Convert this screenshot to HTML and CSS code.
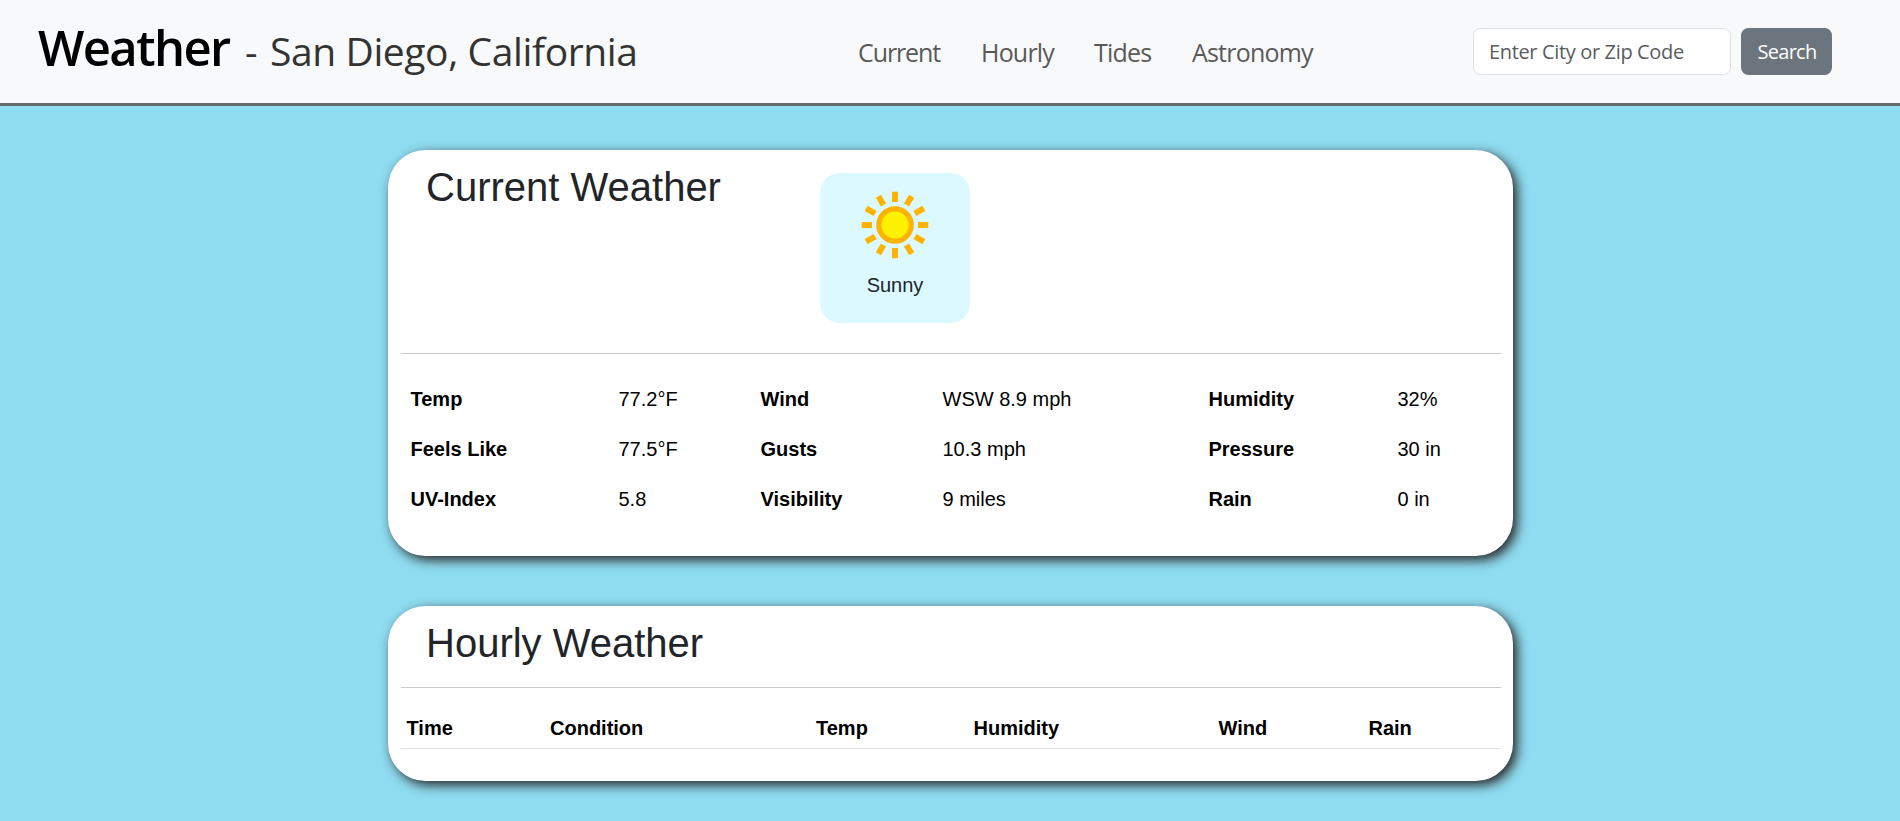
FILE: index.html
```html
<!DOCTYPE html>
<html lang="en">
<head>
<meta charset="utf-8">
<title>Weather</title>
<link rel="stylesheet" href="styles.css">
</head>
<body>
<header class="navbar">
  <div class="brand"><span class="brand-name">Weather</span><span class="brand-dash">-</span><span class="brand-place">San Diego, California</span></div>
  <nav class="nav">
    <a class="nav-link nav-current">Current</a>
    <a class="nav-link nav-hourly">Hourly</a>
    <a class="nav-link nav-tides">Tides</a>
    <a class="nav-link nav-astronomy">Astronomy</a>
  </nav>
  <form class="search">
    <input class="search-input" type="text" placeholder="Enter City or Zip Code">
    <button class="search-button" type="button">Search</button>
  </form>
</header>
<main class="content">
  <section class="card card-current">
    <div class="card-head">
      <h2 class="card-title">Current Weather</h2>
      <div class="condition">
        <svg class="sun" viewBox="0 0 80 80" width="80" height="80">
          <circle cx="40" cy="40" r="16.2" fill="#fff200" stroke="#ffb300" stroke-width="5.2"/>
          <g stroke="#ffb300" stroke-width="6">
            <path d="M40 6.7V17M40 63V73.3M6.7 40H17M63 40H73.3"/>
            <path d="M40 6.7V17M40 63V73.3M6.7 40H17M63 40H73.3" transform="rotate(30 40 40)"/>
            <path d="M40 6.7V17M40 63V73.3M6.7 40H17M63 40H73.3" transform="rotate(60 40 40)"/>
          </g>
        </svg>
        <span class="condition-text">Sunny</span>
      </div>
    </div>
    <div class="stats">
      <b>Temp</b><span>77.2°F</span><b>Wind</b><span>WSW 8.9 mph</span><b>Humidity</b><span>32%</span>
      <b>Feels Like</b><span>77.5°F</span><b>Gusts</b><span>10.3 mph</span><b>Pressure</b><span>30 in</span>
      <b>UV-Index</b><span>5.8</span><b>Visibility</b><span>9 miles</span><b>Rain</b><span>0 in</span>
    </div>
  </section>
  <section class="card card-hourly">
    <div class="card-head">
      <h2 class="card-title">Hourly Weather</h2>
    </div>
    <div class="hours">
      <b>Time</b><b>Condition</b><b>Temp</b><b>Humidity</b><b>Wind</b><b>Rain</b>
    </div>
  </section>
</main>
</body>
</html>
```
FILE: styles.css
```css
* { box-sizing: border-box; }
body {
  margin: 0;
  height: 821px;
  overflow: hidden;
  background: #8fdcf0;
  font: 20px/30px "Liberation Sans", Arial, sans-serif;
  color: #212529;
}
.navbar {
  display: grid;
  grid-template-columns: 858px 615px 1fr;
  height: 106px;
  background: #f8f9fa;
  border-bottom: 3px solid #656a6b;
  font-family: "Open Sans", "Noto Sans", sans-serif;
}
.brand {
  display: flex;
  align-items: baseline;
  padding-left: 38px;
  white-space: nowrap;
  line-height: 95px;
}
.brand-name {
  width: 207px;
  font-size: 49px;
  font-weight: 600;
  color: #000;
  letter-spacing: -1.6px;
}
.brand-dash { width: 25px; font-size: 39px; color: #333; }
.brand-place { font-size: 39px; color: #333; letter-spacing: -0.4px; }
.nav { display: flex; line-height: 105px; font-size: 25px; color: #595959; }
.nav-link { white-space: nowrap; letter-spacing: -0.8px; }
.nav-current { width: 123px; letter-spacing: -1.1px; }
.nav-hourly { width: 113px; }
.nav-tides { width: 98px; }
.search { display: flex; gap: 10px; padding-top: 28px; }
.search-input {
  width: 258px;
  height: 47px;
  padding: 0 15px;
  border: 1px solid #dee2e6;
  border-radius: 7.5px;
  background: #fff;
  font: 20px "Open Sans", "Noto Sans", sans-serif;
  letter-spacing: -0.35px;
}
.search-input::placeholder { color: #595c5f; opacity: 1; }
.search-button {
  width: 91px;
  height: 47px;
  padding: 0 0 0 1px;
  border: 0;
  border-radius: 7.5px;
  background: #6c757d;
  color: #fff;
  font: 20px "Open Sans", "Noto Sans", sans-serif;
  letter-spacing: -0.7px;
}
.content {
  display: flex;
  flex-direction: column;
  gap: 50px;
  width: 1125px;
  margin: 44px 0 0 388px;
}
.card {
  padding: 0 12px 0 13px;
  border-radius: 37.5px;
  background: #fff;
  box-shadow: 4px 4px 12px #242222;
}
.card-current { height: 406px; }
.card-hourly { height: 175px; }
.card-head {
  display: flex;
  border-bottom: 1px solid #c8c9ca;
}
.card-current .card-head { height: 204px; }
.card-hourly .card-head { height: 82px; }
.card-title {
  width: 419px;
  margin: 0;
  padding: 13px 0 0 25px;
  font-size: 40px;
  font-weight: 400;
  line-height: 48px;
}
.condition {
  display: flex;
  flex-direction: column;
  align-items: center;
  width: 150px;
  height: 150px;
  margin-top: 23px;
  padding-top: 12px;
  border-radius: 20px;
  background: #dcf9ff;
}
.condition-text { margin-top: 5px; }
.stats {
  display: grid;
  grid-template-columns: 208px 142px 182px 266px 189px 1fr;
  grid-auto-rows: 50px;
  padding: 20px 0 0 9.5px;
  line-height: 50px;
  color: #000;
}
.hours {
  display: grid;
  grid-template-columns: 143.5px 266px 157.5px 245px 150px 1fr;
  height: 61px;
  padding: 25px 0 0 5.5px;
  line-height: 30px;
  border-bottom: 1px solid #dee2e6;
  color: #000;
}
```
